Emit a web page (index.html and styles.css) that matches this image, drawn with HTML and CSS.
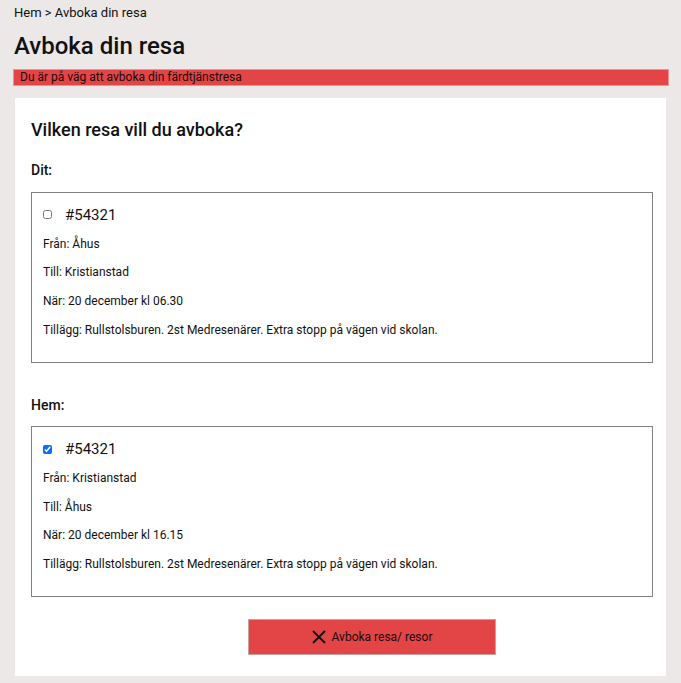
FILE: index.html
```html
<!DOCTYPE html>
<html lang="sv">
<head>
<meta charset="utf-8">
<title>Avboka din resa</title>
<link rel="stylesheet" href="styles.css">
</head>
<body>
<div class="page">
  <nav class="breadcrumb">Hem &gt; Avboka din resa</nav>
  <h1 class="title">Avboka din resa</h1>
  <div class="alert">Du är på väg att avboka din färdtjänstresa</div>
  <main class="card">
    <h2 class="question">Vilken resa vill du avboka?</h2>

    <h3 class="section section-first">Dit:</h3>
    <div class="trip">
      <label class="trip-head"><input type="checkbox" class="check"><span class="trip-id">#54321</span></label>
      <p class="line">Från: Åhus</p>
      <p class="line">Till: Kristianstad</p>
      <p class="line">När: 20 december kl 06.30</p>
      <p class="line">Tillägg: Rullstolsburen. 2st Medresenärer. Extra stopp på vägen vid skolan.</p>
    </div>

    <h3 class="section">Hem:</h3>
    <div class="trip">
      <label class="trip-head"><input type="checkbox" class="check" checked><span class="trip-id">#54321</span></label>
      <p class="line">Från: Kristianstad</p>
      <p class="line">Till: Åhus</p>
      <p class="line">När: 20 december kl 16.15</p>
      <p class="line">Tillägg: Rullstolsburen. 2st Medresenärer. Extra stopp på vägen vid skolan.</p>
    </div>

    <div class="actions">
      <button class="cancel" type="button">
        <svg class="x" width="14" height="14" viewBox="0 0 14 14" aria-hidden="true"><path d="M1 1 L13 13 M13 1 L1 13" stroke="#111" stroke-width="1.8" fill="none"/></svg>
        <span>Avboka resa/ resor</span>
      </button>
    </div>
  </main>
</div>
</body>
</html>
```

FILE: styles.css
```css
* { box-sizing: border-box; }
html, body { margin: 0; padding: 0; }
body {
  background: #ece8e7;
  font-family: Roboto, "Liberation Sans", sans-serif;
  color: #111;
}
.page {
  padding: 5px 12px 7px 13px;
}
.breadcrumb {
  font-size: 13px;
  line-height: 16px;
  padding-left: 1px;
}
.title {
  font-size: 24px;
  font-weight: 500;
  line-height: 28px;
  margin: 11px 0 0 1px;
}
.alert {
  margin-top: 9px;
  background: #e34546;
  border: 1px solid #f09090;
  font-size: 12px;
  line-height: 15px;
  padding: 0 0 0 6px;
  color: #1a0a0a;
}
.card {
  background: #fff;
  margin: 12px 3px 0 2px;
  padding: 20px 13px 21px 16px;
}
.question {
  font-size: 18px;
  font-weight: 500;
  line-height: 24px;
  margin: 0;
}
.section {
  font-size: 14px;
  font-weight: 500;
  line-height: 18px;
  margin: 33px 0 12.5px;
}
.section-first { margin-top: 19px; }
.trip {
  border: 1px solid #808080;
  padding: 12px 11px 24px;
}
.trip-head {
  display: flex;
  align-items: center;
  gap: 13px;
  height: 20px;
  margin-bottom: 11px;
}
.check {
  width: 9px;
  height: 9px;
  margin: 0;
  accent-color: #0a6cf0;
}
.trip-id {
  font-size: 15px;
  line-height: 20px;
}
.line {
  font-size: 12px;
  line-height: 16px;
  margin: 0 0 12.7px;
}
.line:last-child { margin-bottom: 0; }
.actions {
  display: flex;
  padding-left: 217px;
  margin-top: 22px;
}
.cancel {
  width: 248px;
  height: 36px;
  background: #e34546;
  border: 1px solid #c8a0a0;
  display: flex;
  align-items: center;
  justify-content: center;
  gap: 6px;
  font-family: Roboto, "Liberation Sans", sans-serif;
  font-size: 12px;
  color: #1a0a0a;
  padding: 0;
}
.x { display: block; }
```
